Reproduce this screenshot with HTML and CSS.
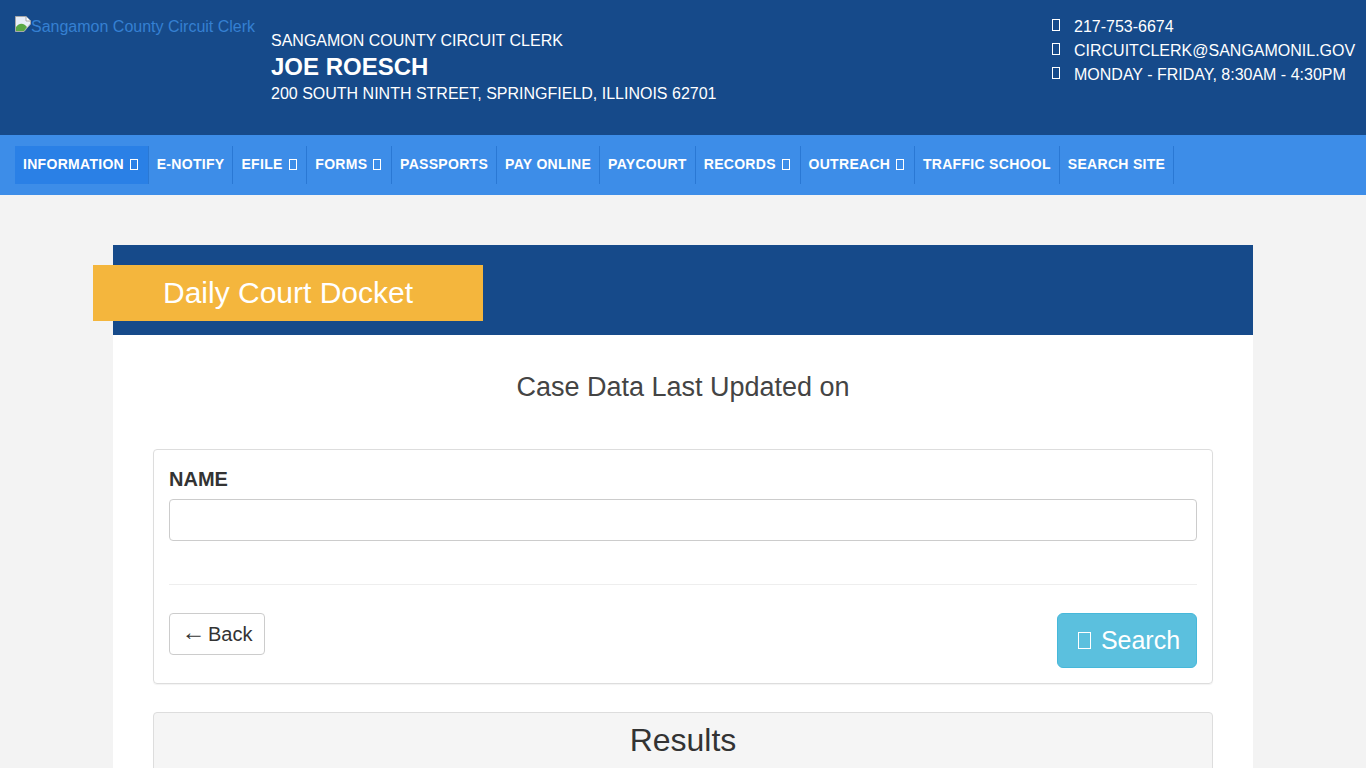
FILE: index.html
```html
<!DOCTYPE html>
<html lang="en">
<head>
<meta charset="utf-8">
<title>Daily Court Docket</title>
<link rel="stylesheet" href="styles.css">
</head>
<body>
<header class="top">
  <a class="logo" href="#"><svg class="broken" viewBox="0 0 16 16" width="16" height="16"><path d="M0.5 0.5H11L15.5 5V8L9 15.5H0.5Z" fill="#e8eef8" stroke="#a8a8a8"/><path d="M1 15V11C4 7 7 7 10 9L12 11L9 15Z" fill="#5aa845"/><path d="M11 0.5V5H15.5" fill="#fff" stroke="#a8a8a8"/></svg>Sangamon County Circuit Clerk</a>
  <div class="office">
    <div>SANGAMON COUNTY CIRCUIT CLERK</div>
    <div class="name">JOE ROESCH</div>
    <div>200 SOUTH NINTH STREET, SPRINGFIELD, ILLINOIS 62701</div>
  </div>
  <ul class="contact">
    <li><span class="tofu"></span>217-753-6674</li>
    <li><span class="tofu"></span>CIRCUITCLERK@SANGAMONIL.GOV</li>
    <li><span class="tofu"></span>MONDAY - FRIDAY, 8:30AM - 4:30PM</li>
  </ul>
</header>
<nav class="nav">
  <a class="active" href="#">INFORMATION<span class="tofu small"></span></a>
  <a href="#">E-NOTIFY</a>
  <a href="#">EFILE<span class="tofu small"></span></a>
  <a href="#">FORMS<span class="tofu small"></span></a>
  <a href="#">PASSPORTS</a>
  <a href="#">PAY ONLINE</a>
  <a href="#">PAYCOURT</a>
  <a href="#">RECORDS<span class="tofu small"></span></a>
  <a href="#">OUTREACH<span class="tofu small"></span></a>
  <a href="#">TRAFFIC SCHOOL</a>
  <a href="#">SEARCH SITE</a>
</nav>
<main class="page">
  <section class="card">
    <div class="band"><h1 class="tag">Daily Court Docket</h1></div>
    <div class="body">
      <h2 class="updated">Case Data Last Updated on</h2>
      <form class="panel">
        <label class="label" for="name">NAME</label>
        <input class="input" id="name" type="text">
        <hr class="rule">
        <div class="actions">
          <button class="back" type="button"><span class="arrow">←</span><span>Back</span></button>
          <button class="search" type="button"><span class="tofu big"></span>Search</button>
        </div>
      </form>
      <div class="results"><h2>Results</h2></div>
    </div>
  </section>
</main>
</body>
</html>
```
FILE: styles.css
```css
* { box-sizing: border-box; }
html, body { margin: 0; padding: 0; }
body { background: #f3f3f3; font-family: "Liberation Sans", Arial, sans-serif; font-size: 16px; color: #333; height: 768px; overflow: hidden; }
.top { height: 135px; background: #164a8a; color: #fff; display: flex; align-items: flex-start; padding: 15px 10px 0 15px; }
.logo { width: 256px; color: #3580d2; text-decoration: none; line-height: 22px; white-space: nowrap; flex: none; display: block; padding-top: 1px; }
.broken { vertical-align: top; margin-top: 0; margin-bottom: -2px; }
.office { line-height: 26px; margin-top: 13px; }
.office > div { height: 25px; white-space: nowrap; }
.office .name { font-size: 24px; font-weight: 700; line-height: 28px; height: 28px; }
.contact { list-style: none; margin: 0 0 0 auto; padding: 0; line-height: 24px; width: 304px; }
.contact li { white-space: nowrap; display: flex; align-items: center; height: 24px; }
.tofu { display: inline-block; width: 8px; height: 12px; border: 1px solid currentColor; flex: none; }
.contact .tofu { margin-right: 14px; margin-top: -4px; }
.tofu.small { width: 8px; height: 11px; margin-left: 6px; margin-right: 1.7px; vertical-align: -1px; }
.tofu.big { width: 13px; height: 17px; margin-right: 10px; vertical-align: 0; }
.nav { height: 60px; background: #3d8de8; display: flex; align-items: center; padding: 0 15px; }
.nav a { color: #fff; font-size: 14px; font-weight: 700; text-decoration: none; line-height: 36px; height: 38px; padding: 0 8px; border-right: 1px solid #2a78d4; white-space: nowrap; letter-spacing: 0.3px; }
.nav a.active { background: #2a80e6; }
.page { padding: 50px 113px 0; }
.card { background: #fff; }
.band { height: 90px; background: #164a8a; padding-top: 20px; }
.tag { margin: 0 0 0 -20px; width: 390px; height: 56px; background: #f4b63d; color: #fff; font-size: 30px; font-weight: 400; line-height: 56px; padding-left: 70px; }
.body { padding: 0 40px; }
.updated { margin: 0; padding-top: 37px; height: 114px; text-align: center; font-size: 27px; font-weight: 400; line-height: 30px; color: #444; }
.panel { height: 235px; border: 1px solid #ddd; border-radius: 4px; padding: 15px; box-shadow: 0 1px 1px rgba(0,0,0,.05); display: block; }
.label { display: block; font-size: 20px; font-weight: 700; line-height: 28px; margin-bottom: 6px; }
.input { display: block; width: 100%; height: 42px; border: 1px solid #ccc; border-radius: 4px; background: #fff; }
.rule { border: 0; border-top: 1px solid #eee; margin: 43px 0 28px; }
.actions { display: flex; justify-content: space-between; align-items: flex-start; }
.back { width: 96px; height: 42px; border: 1px solid #ccc; border-radius: 4px; background: #fff; color: #333; font: 20px "Liberation Sans", Arial, sans-serif; padding: 0; }
.arrow { font-size: 24px; line-height: 20px; vertical-align: 1px; margin-right: 2.5px; }
.search { width: 140px; height: 55px; border: 1px solid #46b8da; border-radius: 6px; background: #5bc0de; color: #fff; font: 25px "Liberation Sans", Arial, sans-serif; padding: 0 0 0 4px; }
.results { margin-top: 28px; height: 100px; padding-top: 1px; border: 1px solid #ddd; border-radius: 4px; background: #f5f5f5; text-align: center; }
.results h2 { margin: 0; font-size: 32px; font-weight: 400; line-height: 52px; color: #333; }
```
